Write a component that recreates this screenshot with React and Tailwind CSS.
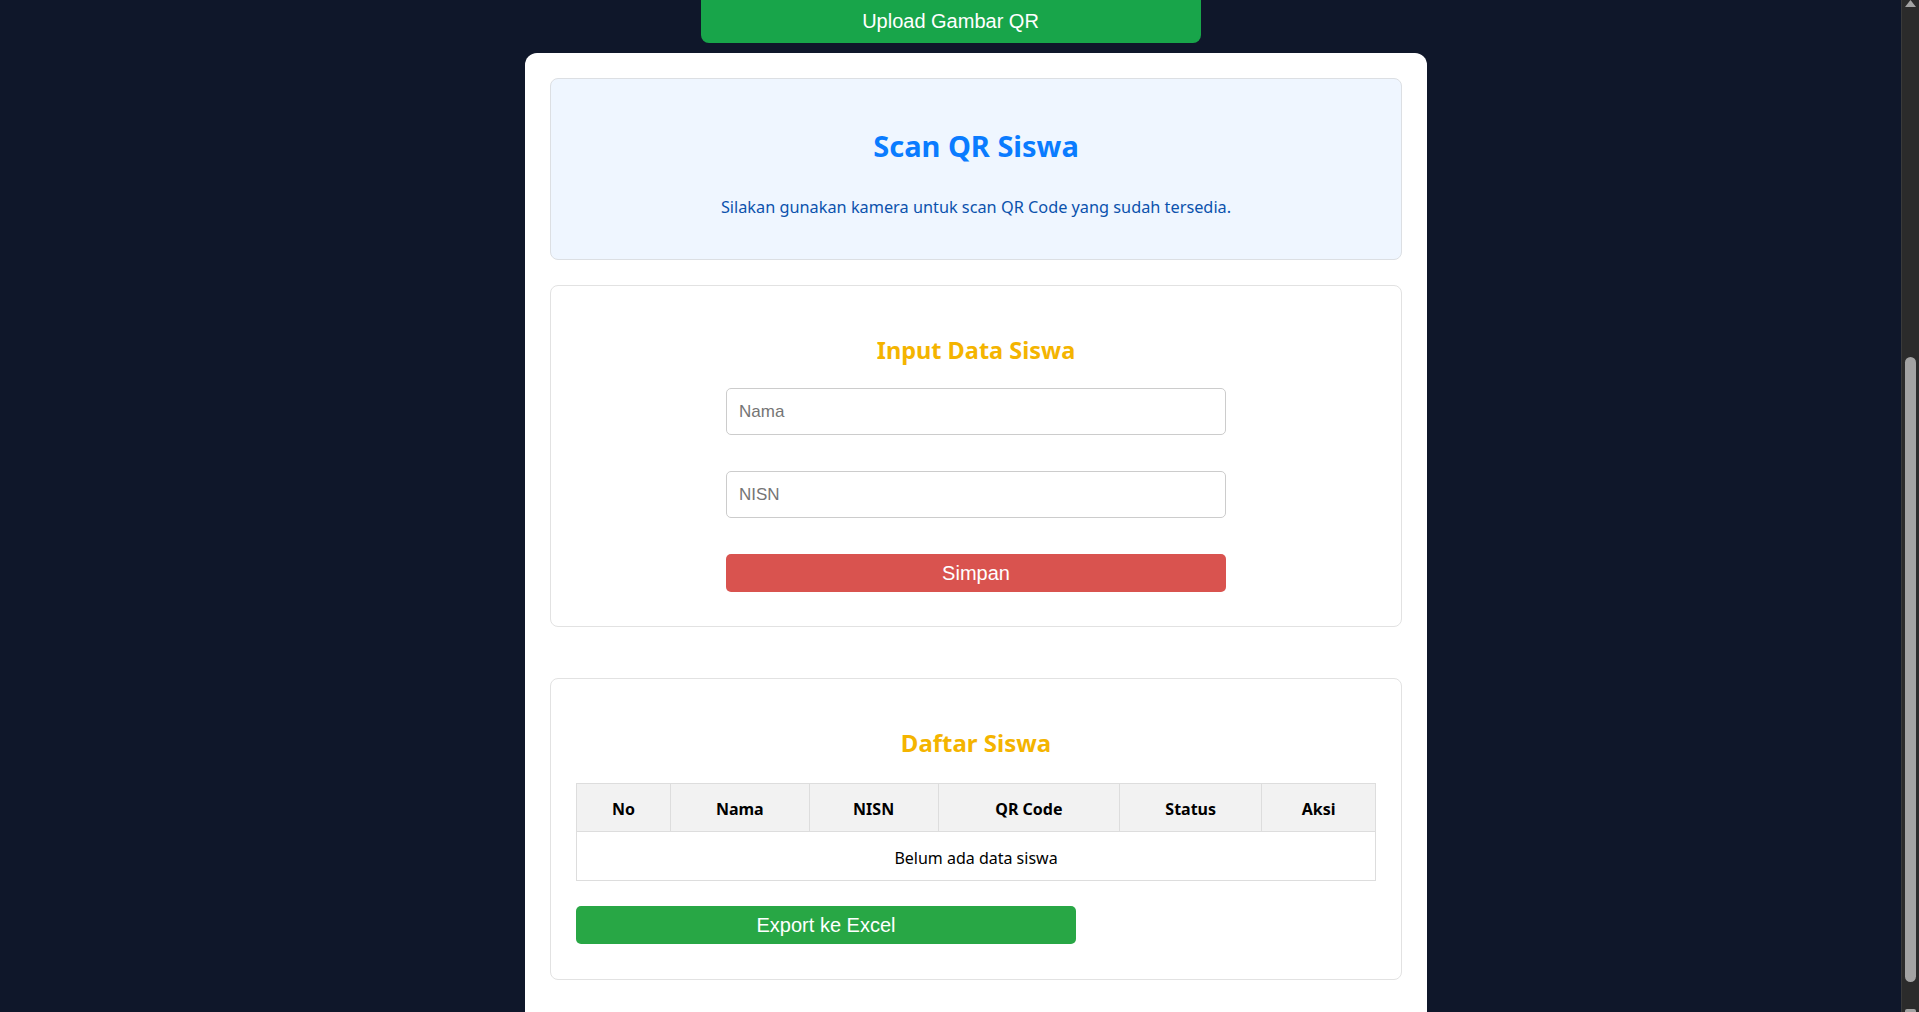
import React from 'react';

const headingFont = { fontFamily: '"Noto Sans", "Open Sans", sans-serif' };
const buttonFont = { fontFamily: '"Liberation Sans", Arial, sans-serif' };

const columns = [
  { label: 'No', width: 'w-[94px]' },
  { label: 'Nama', width: 'w-[139px]' },
  { label: 'NISN', width: 'w-[129px]' },
  { label: 'QR Code', width: 'w-[182px]' },
  { label: 'Status', width: 'w-[142px]' },
  { label: 'Aksi', width: 'w-[114px]' },
];

const Scrollbar = () => (
  <aside className="w-[18px] h-full bg-[#2b2b2b] border-l border-[#3a3a3a] flex flex-col items-center">
    <svg width="11" height="8" viewBox="0 0 11 8">
      <polygon points="5.5,0 11,7 0,7" fill="#a3a3a3" />
    </svg>
    <div className="h-[349px]" />
    <div className="w-[11px] h-[625px] rounded-full bg-[#a3a3a3]" />
    <div className="flex-1" />
    <div className="w-[11px] h-[3px] rounded-t-[2px] bg-[#a3a3a3]" />
  </aside>
);

const ScanCard = () => (
  <section className="border border-[#dcdfe3] rounded-[8px] bg-[#eff6ff] pt-[50px] pb-[40px] text-center">
    <h2 className="text-[29px] leading-[34px] font-bold text-[#0a7cff]" style={headingFont}>
      Scan QR Siswa
    </h2>
    <p className="mt-[32px] text-[16.3px] leading-[24px] text-[#0b52ad]" style={headingFont}>
      Silakan gunakan kamera untuk scan QR Code yang sudah tersedia.
    </p>
  </section>
);

const InputCard = () => (
  <section className="mt-[25px] border border-[#e2e2e2] rounded-[8px] bg-white pt-[50px] pb-[34px] flex flex-col items-center">
    <h3 className="text-[23.5px] leading-[29px] font-bold text-[#f4b400]" style={headingFont}>
      Input Data Siswa
    </h3>
    <input
      type="text"
      placeholder="Nama"
      className="mt-[23px] w-[500px] h-[47px] px-[12px] border border-[#cccccc] rounded-[5px] text-[17px] placeholder:text-[#757575] outline-none"
      style={buttonFont}
    />
    <input
      type="text"
      placeholder="NISN"
      className="mt-[36px] w-[500px] h-[47px] px-[12px] border border-[#cccccc] rounded-[5px] text-[17px] placeholder:text-[#757575] outline-none"
      style={buttonFont}
    />
    <button className="mt-[36px] w-[500px] h-[38px] rounded-[5px] bg-[#d9534f] text-white text-[20px]" style={buttonFont}>
      Simpan
    </button>
  </section>
);

const ListCard = () => (
  <section className="mt-[51px] border border-[#e2e2e2] rounded-[8px] bg-white pt-[49px] pb-[35px] px-[25px]">
    <h3 className="text-center text-[24px] leading-[29px] font-bold text-[#f4b400]" style={headingFont}>
      Daftar Siswa
    </h3>
    <table className="mt-[26px] w-[800px] border-collapse text-[16px] text-black" style={headingFont}>
      <thead>
        <tr className="bg-[#f2f2f2]">
          {columns.map((c) => (
            <th key={c.label} className={`${c.width} h-[48px] pt-[2px] border border-[#dddddd] font-bold text-center`}>
              {c.label}
            </th>
          ))}
        </tr>
      </thead>
      <tbody>
        <tr>
          <td colSpan={6} className="h-[49px] pt-[3px] border border-[#dddddd] text-center">
            Belum ada data siswa
          </td>
        </tr>
      </tbody>
    </table>
    <button className="mt-[25px] w-[500px] h-[38px] rounded-[5px] bg-[#28a745] text-white text-[20px]" style={buttonFont}>
      Export ke Excel
    </button>
  </section>
);

export default function App() {
  return (
    <div className="h-[1012px] w-full overflow-hidden flex bg-[#0f172a]">
      <main className="flex-1 h-full flex flex-col">
        <button
          className="mx-auto w-[500px] h-[43px] pb-[2px] shrink-0 rounded-b-[8px] bg-[#18a54a] text-white text-[20px]"
          style={buttonFont}
        >
          Upload Gambar QR
        </button>
        <div className="mt-[10px] ml-[525px] w-[902px] flex-1 bg-white rounded-t-[12px] px-[25px] pt-[25px]">
          <ScanCard />
          <InputCard />
          <ListCard />
        </div>
      </main>
      <Scrollbar />
    </div>
  );
}
